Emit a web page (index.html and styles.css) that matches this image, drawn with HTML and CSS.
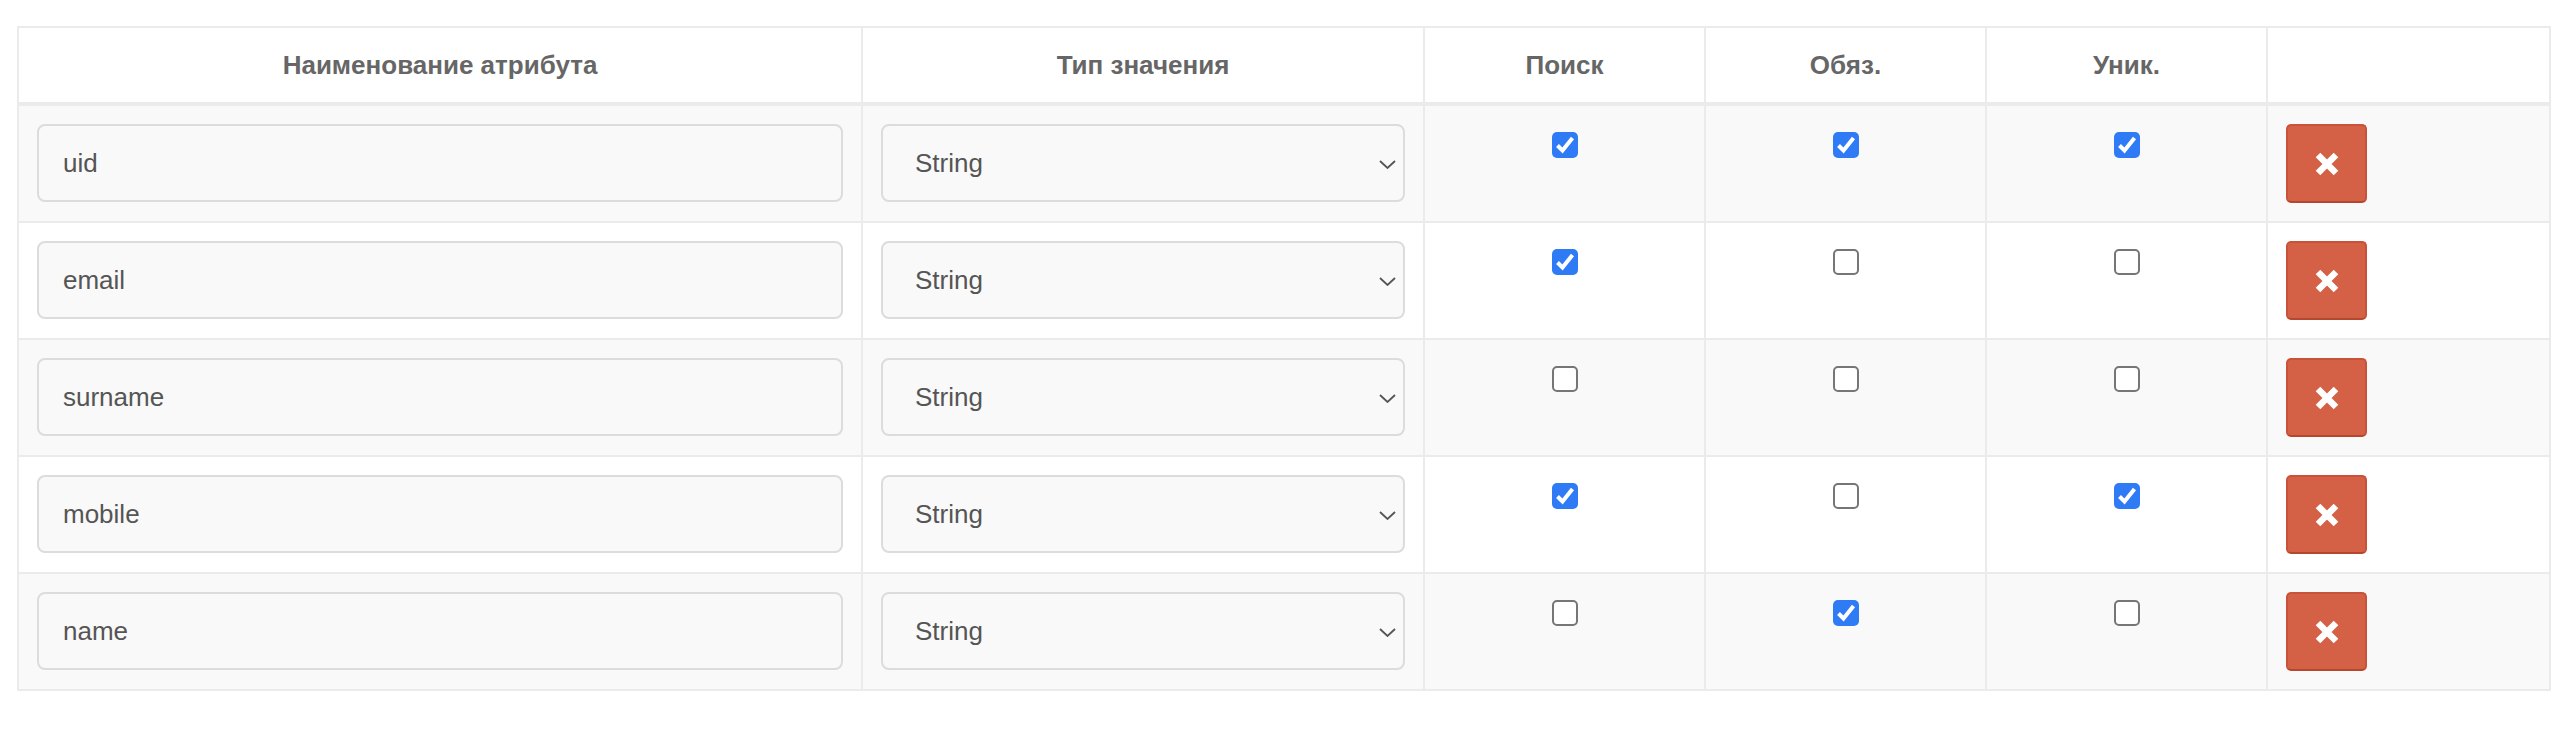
FILE: index.html
```html
<!DOCTYPE html>
<html lang="ru">
<head>
<meta charset="utf-8">
<title>Атрибуты</title>
<link rel="stylesheet" href="styles.css">
</head>
<body>
<div class="page">
  <table class="attrs">
    <colgroup>
      <col class="c-name"><col class="c-type"><col class="c-flag"><col class="c-flag"><col class="c-flag"><col class="c-act">
    </colgroup>
    <thead>
      <tr>
        <th>Наименование атрибута</th>
        <th>Тип значения</th>
        <th>Поиск</th>
        <th>Обяз.</th>
        <th>Уник.</th>
        <th></th>
      </tr>
    </thead>
    <tbody>
      <tr>
        <td><div class="field">uid</div></td>
        <td><div class="select"><span>String</span><svg class="chev" viewBox="0 0 17 9"><path d="M1 1 L8.5 8 L16 1"/></svg></div></td>
        <td class="flag"><span class="cb on"><svg viewBox="0 0 26 26"><path d="M5.5 13.5 L10.5 18.5 L20.5 6"/></svg></span></td>
        <td class="flag"><span class="cb on"><svg viewBox="0 0 26 26"><path d="M5.5 13.5 L10.5 18.5 L20.5 6"/></svg></span></td>
        <td class="flag"><span class="cb on"><svg viewBox="0 0 26 26"><path d="M5.5 13.5 L10.5 18.5 L20.5 6"/></svg></span></td>
        <td><button class="del" type="button"><svg viewBox="0 0 24 24"><path d="M3 3 L21 21 M21 3 L3 21"/></svg></button></td>
      </tr>
      <tr>
        <td><div class="field">email</div></td>
        <td><div class="select"><span>String</span><svg class="chev" viewBox="0 0 17 9"><path d="M1 1 L8.5 8 L16 1"/></svg></div></td>
        <td class="flag"><span class="cb on"><svg viewBox="0 0 26 26"><path d="M5.5 13.5 L10.5 18.5 L20.5 6"/></svg></span></td>
        <td class="flag"><span class="cb"></span></td>
        <td class="flag"><span class="cb"></span></td>
        <td><button class="del" type="button"><svg viewBox="0 0 24 24"><path d="M3 3 L21 21 M21 3 L3 21"/></svg></button></td>
      </tr>
      <tr>
        <td><div class="field">surname</div></td>
        <td><div class="select"><span>String</span><svg class="chev" viewBox="0 0 17 9"><path d="M1 1 L8.5 8 L16 1"/></svg></div></td>
        <td class="flag"><span class="cb"></span></td>
        <td class="flag"><span class="cb"></span></td>
        <td class="flag"><span class="cb"></span></td>
        <td><button class="del" type="button"><svg viewBox="0 0 24 24"><path d="M3 3 L21 21 M21 3 L3 21"/></svg></button></td>
      </tr>
      <tr>
        <td><div class="field">mobile</div></td>
        <td><div class="select"><span>String</span><svg class="chev" viewBox="0 0 17 9"><path d="M1 1 L8.5 8 L16 1"/></svg></div></td>
        <td class="flag"><span class="cb on"><svg viewBox="0 0 26 26"><path d="M5.5 13.5 L10.5 18.5 L20.5 6"/></svg></span></td>
        <td class="flag"><span class="cb"></span></td>
        <td class="flag"><span class="cb on"><svg viewBox="0 0 26 26"><path d="M5.5 13.5 L10.5 18.5 L20.5 6"/></svg></span></td>
        <td><button class="del" type="button"><svg viewBox="0 0 24 24"><path d="M3 3 L21 21 M21 3 L3 21"/></svg></button></td>
      </tr>
      <tr>
        <td><div class="field">name</div></td>
        <td><div class="select"><span>String</span><svg class="chev" viewBox="0 0 17 9"><path d="M1 1 L8.5 8 L16 1"/></svg></div></td>
        <td class="flag"><span class="cb"></span></td>
        <td class="flag"><span class="cb on"><svg viewBox="0 0 26 26"><path d="M5.5 13.5 L10.5 18.5 L20.5 6"/></svg></span></td>
        <td class="flag"><span class="cb"></span></td>
        <td><button class="del" type="button"><svg viewBox="0 0 24 24"><path d="M3 3 L21 21 M21 3 L3 21"/></svg></button></td>
      </tr>
    </tbody>
  </table>
</div>
</body>
</html>
```

FILE: styles.css
```css
* { box-sizing: border-box; }
html, body { margin: 0; padding: 0; background: #fff; }
body {
  font-family: "Liberation Sans", Arial, Helvetica, sans-serif;
  color: #555;
}
.page {
  padding: 26px 9px 0 17px;
}
.attrs {
  width: 2532px;
  table-layout: fixed;
  border-collapse: collapse;
  border: 2px solid #ebebeb;
}
.c-name { width: 844px; }
.c-type { width: 562px; }
.c-flag { width: 281px; }
.c-act { width: 283px; }

.attrs th {
  height: 77px;
  padding: 0 18px;
  border: 2px solid #ebebeb;
  border-bottom: 4px solid #ebebeb;
  font-size: 26px;
  font-weight: bold;
  color: #666;
  text-align: center;
  vertical-align: middle;
}
.attrs td {
  padding: 18px 18px 18px;
  border: 2px solid #ebebeb;
  vertical-align: top;
}
.attrs tbody tr:nth-child(odd) td { background: #f9f9f9; }

.field, .select {
  height: 78px;
  border: 2px solid #dcdcdc;
  border-radius: 8px;
  background: #f9f9f9;
  font-size: 26px;
  color: #555;
  display: flex;
  align-items: center;
}
.field { padding: 0 24px; }
.select {
  position: relative;
  padding: 0 32px;
}
.chev {
  position: absolute;
  right: 7px;
  top: 34px;
  width: 17px;
  height: 9px;
  fill: none;
  stroke: #555;
  stroke-width: 1.8;
}

.flag { text-align: center; }
.cb {
  display: inline-block;
  width: 26px;
  height: 26px;
  margin-top: 8px;
  border: 2px solid #767676;
  border-radius: 5px;
  background: #fff;
  vertical-align: top;
}
.cb.on {
  border: none;
  background: #2f7bf6;
}
.cb svg {
  display: block;
  width: 26px;
  height: 26px;
  fill: none;
  stroke: #fff;
  stroke-width: 4;
}

.del {
  display: flex;
  align-items: center;
  justify-content: center;
  width: 81px;
  height: 79px;
  padding: 0;
  border: 2px solid #c9533a;
  border-bottom-color: #b5472f;
  border-radius: 5px;
  background: #d46045;
  cursor: pointer;
}
.del svg {
  width: 24px;
  height: 24px;
  fill: none;
  stroke: #fff;
  stroke-width: 6.5;
}
```
